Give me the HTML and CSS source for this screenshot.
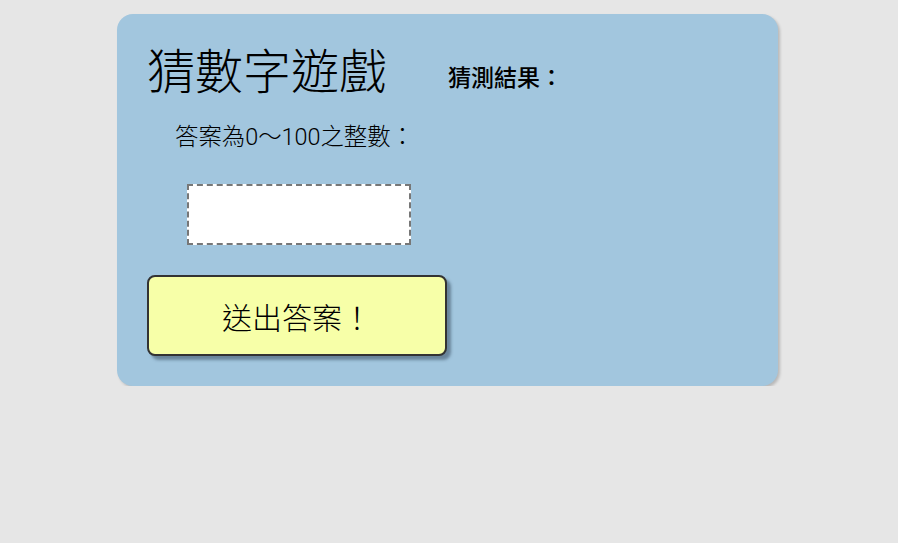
FILE: index.html
```html
<!DOCTYPE html>
<html lang="zh-Hant">
<head>
<meta charset="utf-8">
<link rel="stylesheet" href="styles.css">
</head>
<body>
<div class="card">
  <div class="main">
    <h1 class="title">猜數字遊戲</h1>
    <p class="label">答案為0～100之整數：</p>
    <input class="answer" type="text">
    <button class="submit" type="button">送出答案！</button>
  </div>
  <div class="side">
    <h2 class="result">猜測結果：</h2>
  </div>
</div>
</body>
</html>
```
FILE: styles.css
```css
html, body {
  margin: 0;
  padding: 0;
  background: #e6e6e6;
}
body {
  padding-top: 14px;
  font-family: Roboto, "Noto Sans CJK TC", sans-serif;
  color: #000;
}
.card {
  box-sizing: border-box;
  width: 661px;
  height: 372px;
  margin-left: 117px;
  background: #a2c6de;
  border-radius: 16px;
  box-shadow: 2px 2px 3px rgba(0,0,0,0.2);
  padding: 0 30px;
  display: flex;
  gap: 0;
}
.main {
  display: flex;
  flex-direction: column;
  align-items: flex-start;
}
.title {
  margin: 27px 0 0 0;
  font-size: 48px;
  font-weight: 300;
  line-height: 64px;
}
.label {
  margin: 16px 0 0 28px;
  font-size: 23.4px;
  font-weight: 300;
  line-height: 32px;
}
.answer {
  box-sizing: border-box;
  margin: 31px 0 0 40px;
  width: 224px;
  height: 61px;
  border: 2px dashed #777;
  background: #fff;
  outline: none;
}
.submit {
  box-sizing: border-box;
  margin-top: 30px;
  width: 300px;
  height: 81px;
  background: #f7ffa8;
  border: 2px solid #333;
  border-radius: 8px;
  box-shadow: 4px 4px 3px rgba(60,80,100,0.55);
  font-family: Roboto, "Noto Sans CJK TC", sans-serif;
  font-size: 30px;
  font-weight: 300;
  color: #000;
  padding: 0;
}
.result {
  margin: 50px 0 0 1px;
  font-size: 23px;
  font-weight: 500;
  line-height: 30px;
}
```
